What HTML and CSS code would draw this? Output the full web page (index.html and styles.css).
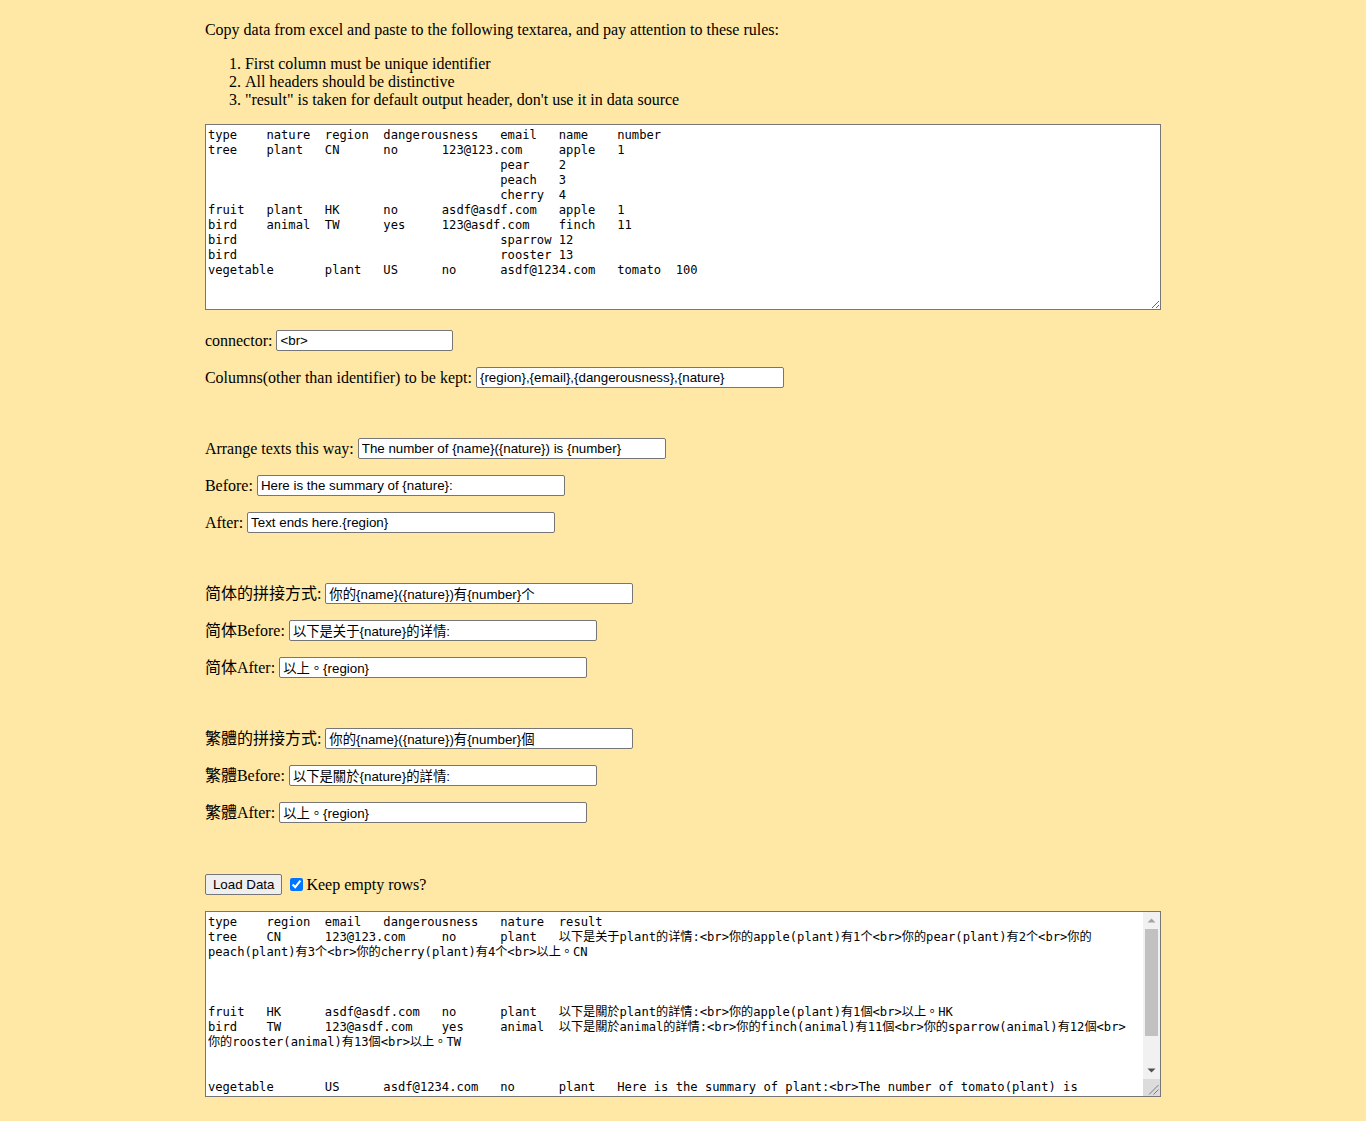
FILE: index.html
```html
<!DOCTYPE html>
<html lang="en">
<head>
<meta charset="utf-8">
<title>Excel to text</title>
<link rel="stylesheet" href="styles.css">
</head>
<body>
<div class="page">
  <p class="intro">Copy data from excel and paste to the following textarea, and pay attention to these rules:</p>
  <ol class="rules">
    <li>First column must be unique identifier</li>
    <li>All headers should be distinctive</li>
    <li>"result" is taken for default output header, don't use it in data source</li>
  </ol>
  <textarea class="sheet source" spellcheck="false">type&#9;nature&#9;region&#9;dangerousness&#9;email&#9;name&#9;number
tree&#9;plant&#9;CN&#9;no&#9;123@123.com&#9;apple&#9;1
&#9;&#9;&#9;&#9;&#9;pear&#9;2
&#9;&#9;&#9;&#9;&#9;peach&#9;3
&#9;&#9;&#9;&#9;&#9;cherry&#9;4
fruit&#9;plant&#9;HK&#9;no&#9;asdf@asdf.com&#9;apple&#9;1
bird&#9;animal&#9;TW&#9;yes&#9;123@asdf.com&#9;finch&#9;11
bird&#9;&#9;&#9;&#9;&#9;sparrow&#9;12
bird&#9;&#9;&#9;&#9;&#9;rooster&#9;13
vegetable&#9;plant&#9;US&#9;no&#9;asdf@1234.com&#9;tomato&#9;100</textarea>

  <div class="group first">
    <div class="row"><label>connector:</label><input class="field short" type="text" value="&lt;br&gt;"></div>
    <div class="row"><label>Columns(other than identifier) to be kept:</label><input class="field" type="text" value="{region},{email},{dangerousness},{nature}"></div>
  </div>

  <div class="group">
    <div class="row"><label>Arrange texts this way:</label><input class="field" type="text" value="The number of {name}({nature}) is {number}"></div>
    <div class="row"><label>Before:</label><input class="field" type="text" value="Here is the summary of {nature}:"></div>
    <div class="row"><label>After:</label><input class="field" type="text" value="Text ends here.{region}"></div>
  </div>

  <div class="group">
    <div class="row"><label>简体的拼接方式:</label><input class="field" type="text" value="你的{name}({nature})有{number}个"></div>
    <div class="row"><label>简体Before:</label><input class="field" type="text" value="以下是关于{nature}的详情:"></div>
    <div class="row"><label>简体After:</label><input class="field" type="text" value="以上。{region}"></div>
  </div>

  <div class="group">
    <div class="row"><label>繁體的拼接方式:</label><input class="field" type="text" value="你的{name}({nature})有{number}個"></div>
    <div class="row"><label>繁體Before:</label><input class="field" type="text" value="以下是關於{nature}的詳情:"></div>
    <div class="row"><label>繁體After:</label><input class="field" type="text" value="以上。{region}"></div>
  </div>

  <div class="actions">
    <button class="btn" type="button">Load Data</button>
    <label class="check"><input class="box" type="checkbox" checked>Keep empty rows?</label>
  </div>

  <div class="out-wrap">
    <textarea class="sheet output" spellcheck="false">type&#9;region&#9;email&#9;dangerousness&#9;nature&#9;result
tree&#9;CN&#9;123@123.com&#9;no&#9;plant&#9;以下是关于plant的详情:&lt;br&gt;你的apple(plant)有1个&lt;br&gt;你的pear(plant)有2个&lt;br&gt;你的
peach(plant)有3个&lt;br&gt;你的cherry(plant)有4个&lt;br&gt;以上。CN



fruit&#9;HK&#9;asdf@asdf.com&#9;no&#9;plant&#9;以下是關於plant的詳情:&lt;br&gt;你的apple(plant)有1個&lt;br&gt;以上。HK
bird&#9;TW&#9;123@asdf.com&#9;yes&#9;animal&#9;以下是關於animal的詳情:&lt;br&gt;你的finch(animal)有11個&lt;br&gt;你的sparrow(animal)有12個&lt;br&gt;
你的rooster(animal)有13個&lt;br&gt;以上。TW


vegetable&#9;US&#9;asdf@1234.com&#9;no&#9;plant&#9;Here is the summary of plant:&lt;br&gt;The number of tomato(plant) is 100&lt;br&gt;Text ends here.US

</textarea>
    <div class="vscroll" aria-hidden="true">
      <div class="sb-btn">
        <svg width="17" height="17" viewBox="0 0 17 17"><polygon points="4.5,10.5 12.5,10.5 8.5,6.5" fill="#a3a3a3"/></svg>
      </div>
      <div class="sb-track"><div class="sb-thumb"></div></div>
      <div class="sb-btn">
        <svg width="17" height="17" viewBox="0 0 17 17"><polygon points="4.5,6.5 12.5,6.5 8.5,10.5" fill="#505050"/></svg>
      </div>
    </div>
    <div class="sb-corner" aria-hidden="true">
      <svg width="17" height="17" viewBox="0 0 17 17">
        <line x1="15.5" y1="6" x2="6" y2="15.5" stroke="#7c7c7c" stroke-width="1"/>
        <line x1="15.5" y1="10.5" x2="10.5" y2="15.5" stroke="#7c7c7c" stroke-width="1"/>
      </svg>
    </div>
  </div>
</div>
</body>
</html>
```

FILE: styles.css
```css
html, body {
  margin: 0;
  padding: 0;
}

body {
  background: #ffe8a5;
  color: #000;
  font-family: "Liberation Serif", "Noto Sans CJK TC", serif;
  font-size: 16px;
}

.page {
  width: 70%;
  margin: 0 auto;
  padding: 21px 0 24px;
}

.intro {
  margin: 0;
  line-height: 18px;
}

.rules {
  margin: 16px 0 15px;
  padding-left: 40px;
  line-height: 18px;
}

.sheet {
  display: block;
  box-sizing: border-box;
  width: 100%;
  height: 186px;
  margin: 0;
  padding: 3px 2px 1px;
  border: 1px solid #767676;
  border-radius: 0;
  background: #fff;
  color: #000;
  font-family: "DejaVu Sans Mono", "Noto Sans CJK TC", monospace;
  font-size: 12.15px;
  line-height: 15px;
  tab-size: 8;
  -moz-tab-size: 8;
  outline: none;
}

.out-wrap {
  position: relative;
  margin-top: 16px;
}

.output {
  padding-right: 19px;
  overflow: hidden;
}

.vscroll {
  position: absolute;
  top: 1px;
  right: 1px;
  width: 17px;
  height: 167px;
  display: flex;
  flex-direction: column;
  background: #f1f1f1;
}

.sb-btn {
  height: 17px;
  flex: none;
}

.sb-btn svg {
  display: block;
}

.sb-track {
  flex: 1;
  padding: 0 2px;
}

.sb-thumb {
  height: 107px;
  background: #c1c1c1;
}

.sb-corner {
  position: absolute;
  right: 1px;
  bottom: 1px;
  width: 17px;
  height: 17px;
  background: #dcdcdc;
  pointer-events: none;
}

.sb-corner svg {
  display: block;
}

.group {
  display: flex;
  flex-direction: column;
  gap: 16px;
  margin-top: 50px;
}

.group.first {
  margin-top: 20px;
}

.row {
  display: flex;
  align-items: center;
  gap: 4px;
  height: 21px;
}

.row label {
  white-space: nowrap;
  line-height: 18px;
}

.field {
  box-sizing: border-box;
  width: 308px;
  height: 21px;
  margin: 0;
  padding: 1px 3px;
  border: 1px solid #767676;
  border-radius: 2px;
  background: #fff;
  color: #000;
  font-family: "Liberation Sans", "Noto Sans CJK TC", sans-serif;
  font-size: 13.33px;
  outline: none;
}

.field.short {
  width: 177px;
}

.actions {
  display: flex;
  align-items: center;
  gap: 8px;
  height: 21px;
  margin-top: 51px;
}

.btn {
  box-sizing: border-box;
  height: 21px;
  margin: 0;
  padding: 1px 7px;
  border: 1px solid #767676;
  border-radius: 2px;
  background: #efefef;
  color: #000;
  font-family: "Liberation Sans", sans-serif;
  font-size: 13.33px;
}

.check {
  display: flex;
  align-items: center;
  line-height: 18px;
}

.box {
  width: 13px;
  height: 13px;
  margin: 0 3px 0 0;
  accent-color: #0075ff;
}
```
